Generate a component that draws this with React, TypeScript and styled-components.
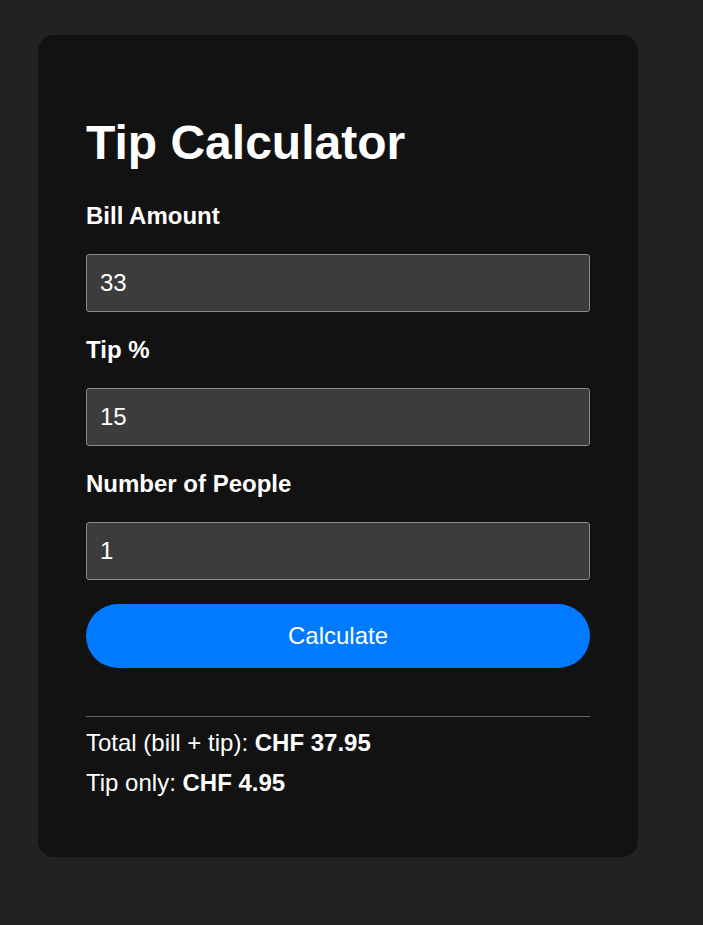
import React from "react";
import styled, { createGlobalStyle } from "styled-components";

const GlobalStyle = createGlobalStyle`
  html, body {
    margin: 0;
    padding: 0;
    background: #222222;
  }
  body {
    font-family: "Liberation Sans", Arial, sans-serif;
    color: #ffffff;
  }
`;

const Page = styled.div`
  padding: 35px 0 68px 38px;
`;

const Card = styled.div`
  width: 600px;
  box-sizing: border-box;
  background: #121212;
  border-radius: 16px;
  padding: 48px;
`;

const Title = styled.h1`
  font-size: 48px;
  font-weight: 700;
  margin: 32px 0 32px;
  line-height: 55px;
`;

const Field = styled.div`
  display: flex;
  flex-direction: column;
  gap: 24px;
  margin-bottom: 24px;
`;

const Label = styled.label`
  font-size: 24px;
  font-weight: 700;
  line-height: 28px;
`;

const Input = styled.input`
  box-sizing: border-box;
  width: 100%;
  height: 58px;
  padding: 0 13px;
  font-family: "Liberation Sans", Arial, sans-serif;
  font-size: 24px;
  color: #ffffff;
  background: #3c3c3c;
  border: 1px solid #8a8a8a;
  border-radius: 3px;
  outline: none;
`;

const Button = styled.button`
  display: block;
  width: 100%;
  height: 64px;
  border: none;
  border-radius: 32px;
  background: #007bff;
  color: #ffffff;
  font-family: "Liberation Sans", Arial, sans-serif;
  font-size: 24px;
  cursor: pointer;
`;

const Result = styled.div`
  margin-top: 48px;
  border-top: 1px solid #666666;
  padding-top: 12px;
`;

const Line = styled.p`
  margin: 0 0 12px;
  font-size: 24px;
  line-height: 28px;
  strong {
    font-weight: 700;
  }
`;

const fields = [
  { label: "Bill Amount", value: "33" },
  { label: "Tip %", value: "15" },
  { label: "Number of People", value: "1" },
];

export default function App() {
  return (
    <>
      <GlobalStyle />
      <Page>
        <Card>
          <Title>Tip Calculator</Title>
          {fields.map((f) => (
            <Field key={f.label}>
              <Label>{f.label}</Label>
              <Input type="text" defaultValue={f.value} />
            </Field>
          ))}
          <Button>Calculate</Button>
          <Result>
            <Line>
              Total (bill + tip): <strong>CHF 37.95</strong>
            </Line>
            <Line>
              Tip only: <strong>CHF 4.95</strong>
            </Line>
          </Result>
        </Card>
      </Page>
    </>
  );
}
